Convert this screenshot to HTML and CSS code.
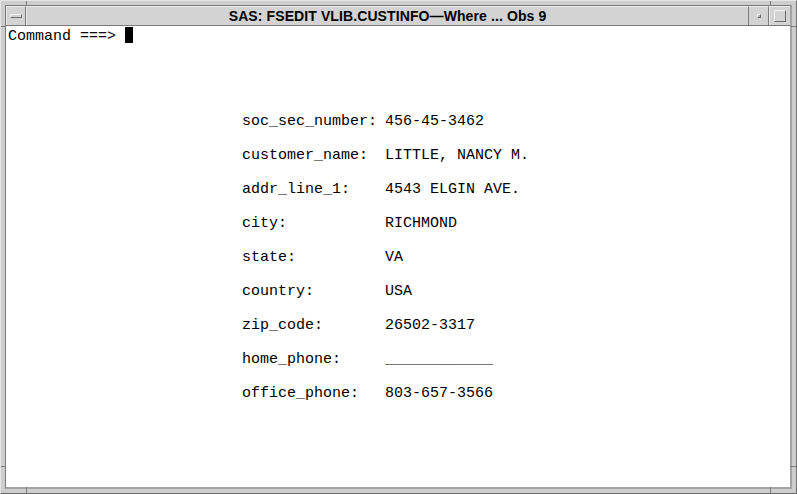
FILE: index.html
```html
<!DOCTYPE html>
<html>
<head>
<meta charset="utf-8">
<link rel="stylesheet" href="styles.css">
</head>
<body>
<div class="window">
  <span class="tick tick-tl-h"></span>
  <span class="tick tick-tl-v"></span>
  <span class="tick tick-tr-h"></span>
  <span class="tick tick-tr-v"></span>
  <span class="tick tick-bl-h"></span>
  <span class="tick tick-bl-v"></span>
  <span class="tick tick-br-h"></span>
  <span class="tick tick-br-v"></span>
  <div class="inner">
    <div class="titlebar">
      <div class="tbtn menu-btn"><span class="menu-icon"></span></div>
      <div class="title">SAS: FSEDIT VLIB.CUSTINFO<span class="dash">—</span>Where ... Obs 9</div>
      <div class="tbtn min-btn"><span class="min-icon"></span></div>
      <div class="tbtn max-btn"><span class="max-icon"></span></div>
    </div>
    <div class="client">
      <div class="command">Command ===> <span class="cursor"></span></div>
      <div class="form">
        <div class="label">soc_sec_number:</div><div class="value">456-45-3462</div>
        <div class="label">customer_name:</div><div class="value">LITTLE, NANCY M.</div>
        <div class="label">addr_line_1:</div><div class="value">4543 ELGIN AVE.</div>
        <div class="label">city:</div><div class="value">RICHMOND</div>
        <div class="label">state:</div><div class="value">VA</div>
        <div class="label">country:</div><div class="value">USA</div>
        <div class="label">zip_code:</div><div class="value">26502-3317</div>
        <div class="label">home_phone:</div><div class="value">____________</div>
        <div class="label">office_phone:</div><div class="value">803-657-3566</div>
      </div>
    </div>
  </div>
</div>
</body>
</html>
```

FILE: styles.css
```css
html, body {
  margin: 0;
  padding: 0;
  background: #ffffff;
}

.window {
  position: relative;
  width: 797px;
  height: 494px;
  box-sizing: border-box;
  background: #cdcdcd;
  border-top: 1px solid #e6e6e6;
  border-left: 1px solid #e6e6e6;
  border-right: 1px solid #6e6e6e;
  border-bottom: 1px solid #6e6e6e;
  padding: 4px 4px 4px 4px;
  display: flex;
  flex-direction: column;
}

.tick {
  position: absolute;
  background: #7a7a7a;
}
.tick-tl-h { left: 0; top: 25px; width: 5px; height: 1px; }
.tick-tl-v { left: 25px; top: 0; width: 1px; height: 5px; }
.tick-tr-h { right: 0; top: 25px; width: 6px; height: 1px; }
.tick-tr-v { left: 769px; top: 0; width: 1px; height: 5px; }
.tick-bl-h { left: 0; top: 465px; width: 5px; height: 1px; }
.tick-bl-v { left: 25px; bottom: 0; width: 1px; height: 6px; }
.tick-br-h { right: 0; top: 465px; width: 6px; height: 1px; }
.tick-br-v { left: 769px; bottom: 0; width: 1px; height: 6px; }

.inner {
  flex: 1;
  display: flex;
  flex-direction: column;
  border-top: 1px solid #7a7a7a;
  border-left: 1px solid #7a7a7a;
  border-right: 2px solid #a4a4a4;
  border-bottom: 2px solid #a4a4a4;
}

.titlebar {
  height: 19px;
  display: flex;
  background: #d3d3d3;
  border-bottom: 1px solid #7a7a7a;
}

.tbtn {
  width: 20px;
  display: flex;
  align-items: center;
  justify-content: center;
  border-top: 1px solid #ececec;
  box-sizing: border-box;
}
.menu-btn {
  border-right: 1px solid #7a7a7a;
  border-left: 1px solid #ececec;
}
.min-btn {
  width: 21px;
  border-left: 1px solid #7a7a7a;
  border-right: 1px solid #7a7a7a;
}
.max-btn {
  width: 21px;
  border-left: 1px solid #ececec;
}

.menu-icon {
  display: block;
  width: 12px;
  height: 4px;
  box-sizing: border-box;
  border-top: 1px solid #f2f2f2;
  border-left: 1px solid #f2f2f2;
  border-right: 1px solid #6a6a6a;
  border-bottom: 1px solid #6a6a6a;
}
.min-icon {
  display: block;
  width: 4px;
  height: 4px;
  box-sizing: border-box;
  border-top: 1px solid #f2f2f2;
  border-left: 1px solid #f2f2f2;
  border-right: 1px solid #6a6a6a;
  border-bottom: 1px solid #6a6a6a;
  background: #b0b0b0;
}
.max-icon {
  display: block;
  width: 12px;
  height: 12px;
  box-sizing: border-box;
  border-top: 1px solid #f2f2f2;
  border-left: 1px solid #f2f2f2;
  border-right: 1px solid #6a6a6a;
  border-bottom: 1px solid #6a6a6a;
}

.title {
  flex: 1;
  text-align: center;
  font-family: "Liberation Sans", Arial, sans-serif;
  font-weight: bold;
  font-size: 14px;
  line-height: 18px;
  color: #000;
  border-top: 1px solid #ececec;
  border-left: 1px solid #ececec;
  letter-spacing: 0.1px;
}
.dash {
  font-weight: 900;
}

.client {
  flex: 1;
  background: #ffffff;
  font-family: "Liberation Mono", "Courier New", monospace;
  font-size: 15px;
  color: #000;
  padding-left: 2px;
}

.command {
  height: 18px;
  line-height: 18px;
  padding-top: 1px;
  white-space: pre;
}
.cursor {
  display: inline-block;
  width: 8px;
  height: 16px;
  background: #000;
  vertical-align: -3px;
}

.form {
  margin-top: 69px;
  margin-left: 234px;
  display: grid;
  grid-template-columns: 143px auto;
  grid-auto-rows: 34px;
  line-height: 16px;
}
.label, .value {
  white-space: pre;
}
```
